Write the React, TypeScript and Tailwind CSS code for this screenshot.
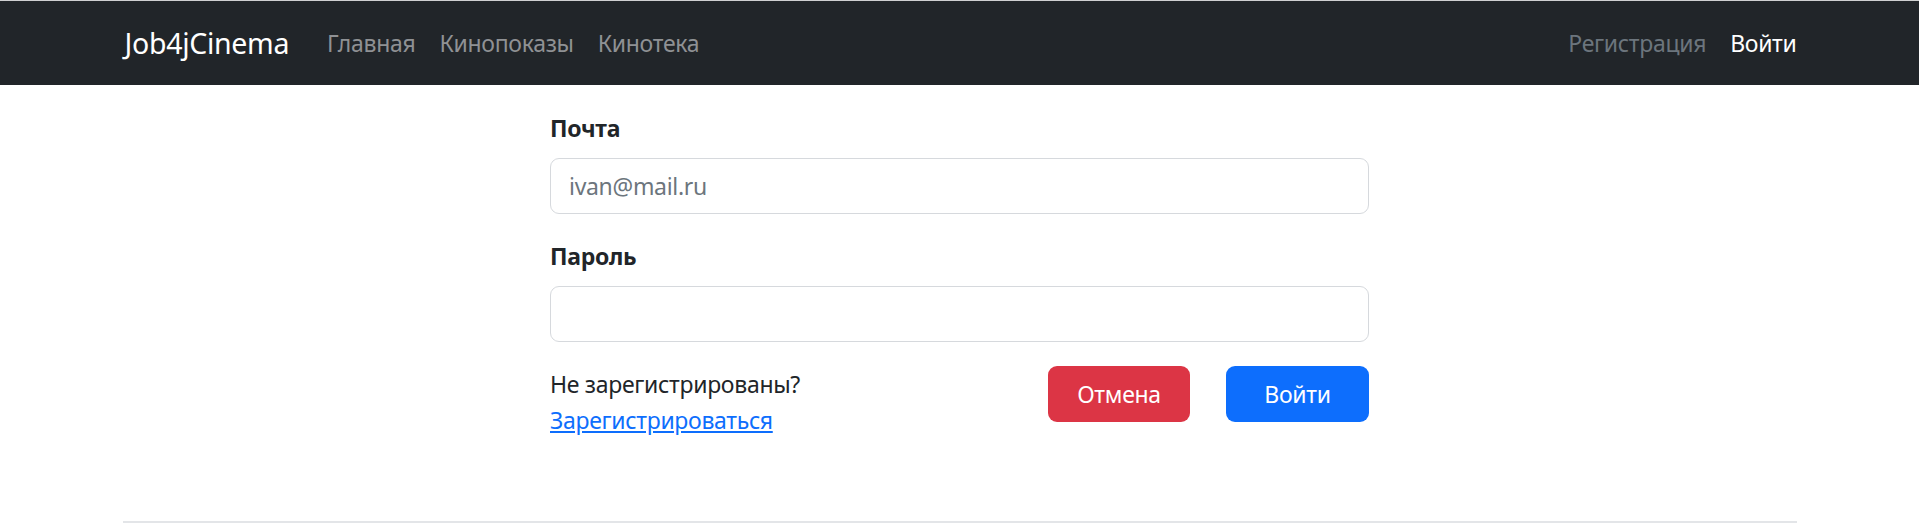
import { useState } from "react"

const font = { fontFamily: '"Noto Sans", "Open Sans", sans-serif' }

const NavBar = () => {
  return (
    <nav className="bg-[#212529] border-t border-[#cfd0d1] h-[85px] flex items-center">
      <div className="w-[1674px] mx-auto flex items-center justify-between">
        <div className="flex items-center">
          <a href="#" className="text-[28.5px] tracking-[-0.3px] leading-[45px] text-white mr-[26px] pl-[2px]">Job4jCinema</a>
          <ul className="flex items-center text-[23px] tracking-[-0.3px] text-[#8f9194]">
            <li><a href="#" className="px-[12px]">Главная</a></li>
            <li><a href="#" className="px-[12px]">Кинопоказы</a></li>
            <li><a href="#" className="px-[12px]">Кинотека</a></li>
          </ul>
        </div>
        <ul className="flex items-center text-[23px] tracking-[-0.3px]">
          <li><a href="#" className="px-[12px] text-[#6c757d]">Регистрация</a></li>
          <li><a href="#" className="pl-[12px] text-white">Войти</a></li>
        </ul>
      </div>
    </nav>
  )
}

const App = () => {
  const [email, setEmail] = useState("")
  const [password, setPassword] = useState("")
  return (
    <div className="min-h-[524px] bg-white text-[#212529]" style={font}>
      <NavBar />
      <div className="w-[819px] mx-auto pt-[25px] text-[23px] tracking-[-0.3px] leading-[36px]">
        <div className="mb-[24px]">
          <label className="block font-bold mb-[12px]">Почта</label>
          <input
            type="email"
            value={email}
            onChange={(e) => setEmail(e.target.value)}
            placeholder="ivan@mail.ru"
            className="w-full h-[56px] px-[18px] border border-[#d6d9dd] rounded-[9px] placeholder:text-[#6c757d] outline-none"
          />
        </div>
        <div className="mb-[24px]">
          <label className="block font-bold mb-[12px]">Пароль</label>
          <input
            type="password"
            value={password}
            onChange={(e) => setPassword(e.target.value)}
            className="w-full h-[56px] px-[18px] border border-[#d6d9dd] rounded-[9px] outline-none"
          />
        </div>
        <div className="flex items-start">
          <div className="flex-1">
            <div>Не зарегистрированы?</div>
            <a href="#" className="text-[#0d6efd] underline">Зарегистрироваться</a>
          </div>
          <button className="w-[142px] h-[56px] rounded-[9px] bg-[#dc3545] text-white">Отмена</button>
          <button className="w-[143px] h-[56px] ml-[36px] rounded-[9px] bg-[#0d6efd] text-white">Войти</button>
        </div>
      </div>
      <div className="w-[1674px] mx-auto mt-[83px] border-t-2 border-[#e3e5e8]" />
    </div>
  )
}

export default App
